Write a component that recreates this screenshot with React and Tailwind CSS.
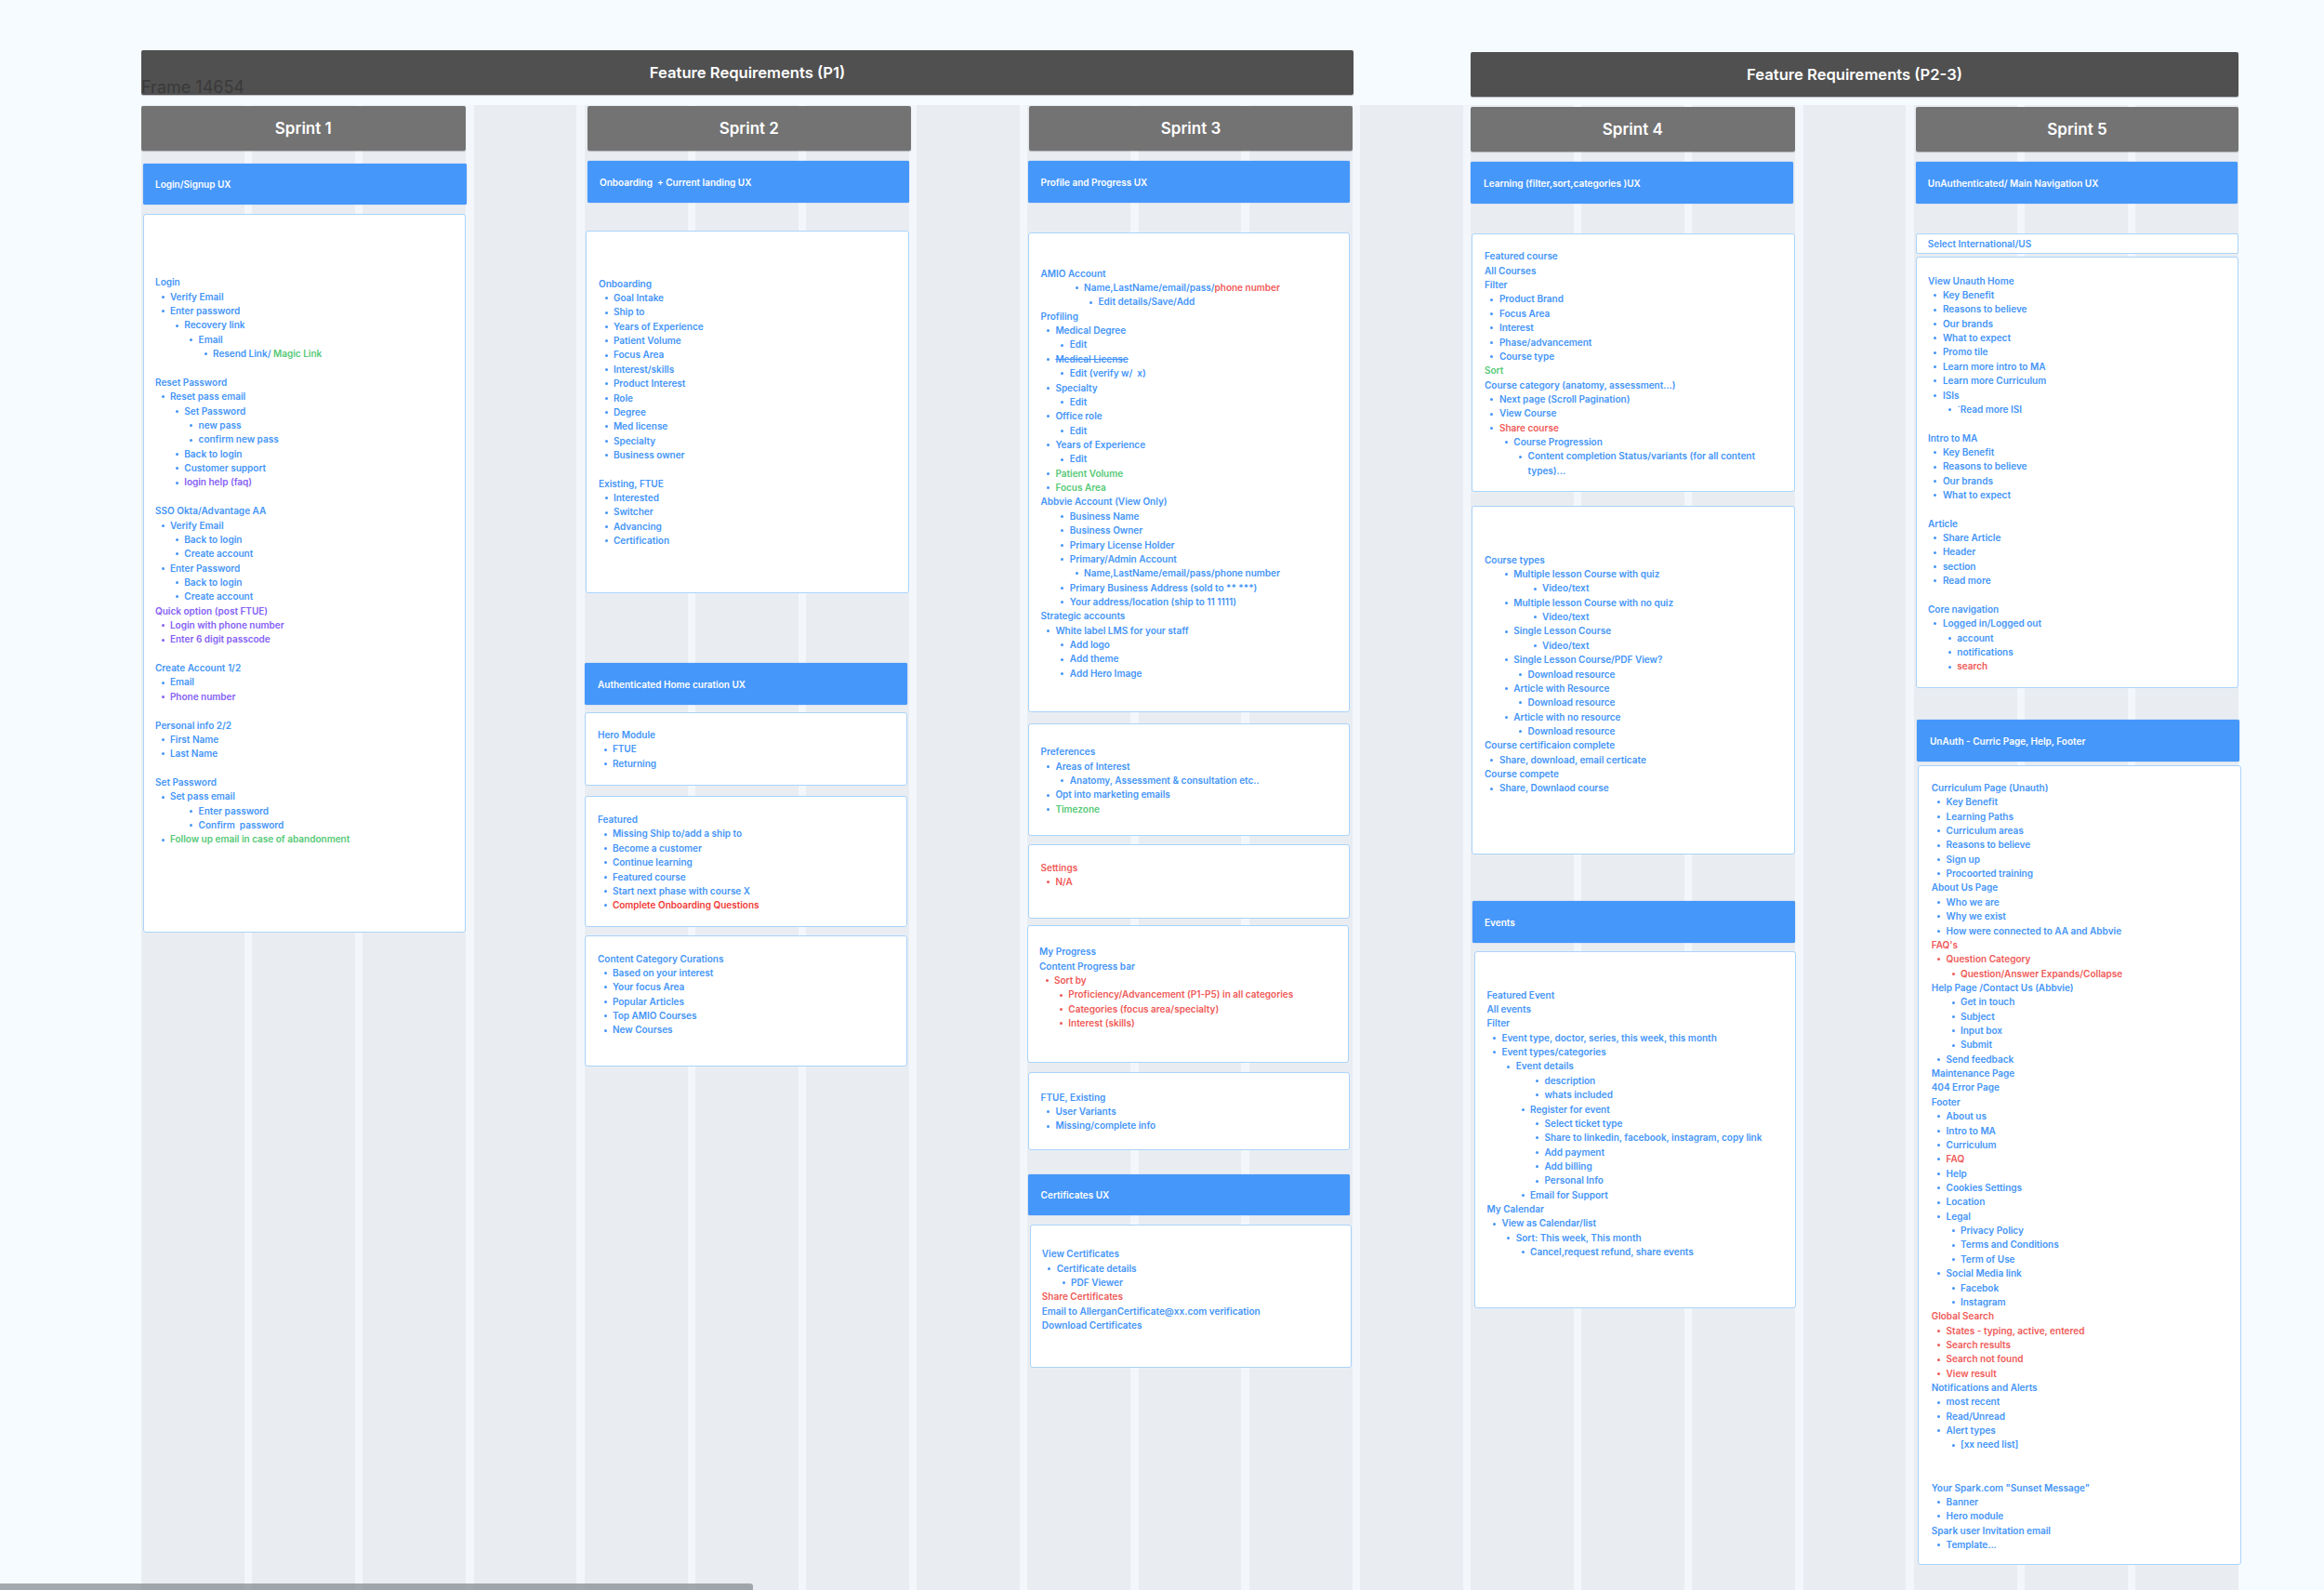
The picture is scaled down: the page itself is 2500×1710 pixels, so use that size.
import React from "react";

// text colours used in the requirement lists
const textColors = {
  blue: "text-[#4495f8]",
  red: "text-[#ef5a57]",
  hot: "text-[#f03a36]",
  green: "text-[#55c975]",
  purple: "text-[#8560f5]",
};

const bulletColors = {
  blue: "bg-[#4495f8]",
  red: "bg-[#ef5a57]",
  purple: "bg-[#8560f5]",
};

const levelPad = [
  "pl-0",
  "pl-[6.5px]",
  "pl-[21.9px]",
  "pl-[37.2px]",
  "pl-[52.6px]",
];

// row = [level, text, textColor, bulletColor]; null = empty row
const sprint1 = [
  [0, "Login"],
  [1, "Verify Email"],
  [1, "Enter password"],
  [2, "Recovery link"],
  [3, "Email"],
  [4, <>Resend Link/ <span className={textColors.green}>Magic Link</span></>],
  null,
  [0, "Reset Password"],
  [1, "Reset pass email"],
  [2, "Set Password"],
  [3, "new pass"],
  [3, "confirm new pass"],
  [2, "Back to login"],
  [2, "Customer support"],
  [2, "login help (faq)", "purple"],
  null,
  [0, "SSO Okta/Advantage AA"],
  [1, "Verify Email"],
  [2, "Back to login"],
  [2, "Create account"],
  [1, "Enter Password"],
  [2, "Back to login"],
  [2, "Create account"],
  [0, "Quick option (post FTUE)", "purple"],
  [1, "Login with phone number", "purple", "purple"],
  [1, "Enter 6 digit passcode", "purple", "purple"],
  null,
  [0, "Create Account 1/2"],
  [1, "Email"],
  [1, "Phone number", "purple", "purple"],
  null,
  [0, "Personal info 2/2"],
  [1, "First Name"],
  [1, "Last Name"],
  null,
  [0, "Set Password"],
  [1, "Set pass email"],
  [3, "Enter password"],
  [3, "Confirm  password"],
  [1, "Follow up email in case of abandonment", "green"],
];

const onboarding = [
  [0, "Onboarding"],
  [1, "Goal Intake"],
  [1, "Ship to"],
  [1, "Years of Experience"],
  [1, "Patient Volume"],
  [1, "Focus Area"],
  [1, "Interest/skills"],
  [1, "Product Interest"],
  [1, "Role"],
  [1, "Degree"],
  [1, "Med license"],
  [1, "Specialty"],
  [1, "Business owner"],
  null,
  [0, "Existing, FTUE"],
  [1, "Interested"],
  [1, "Switcher"],
  [1, "Advancing"],
  [1, "Certification"],
];

const hero = [
  [0, "Hero Module"],
  [1, "FTUE"],
  [1, "Returning"],
];

const featured = [
  [0, "Featured"],
  [1, "Missing Ship to/add a ship to"],
  [1, "Become a customer"],
  [1, "Continue learning"],
  [1, "Featured course"],
  [1, "Start next phase with course X"],
  [1, "Complete Onboarding Questions", "hot"],
];

const curations = [
  [0, "Content Category Curations"],
  [1, "Based on your interest"],
  [1, "Your focus Area"],
  [1, "Popular Articles"],
  [1, "Top AMIO Courses"],
  [1, "New Courses"],
];

const profile = [
  [0, "AMIO Account"],
  [3, <>Name,LastName/email/pass/<span className={textColors.red}>phone number</span></>],
  [4, "Edit details/Save/Add"],
  [0, "Profiling"],
  [1, "Medical Degree"],
  [2, "Edit"],
  [1, <span className="line-through">Medical License</span>],
  [2, "Edit (verify w/  x)"],
  [1, "Specialty"],
  [2, "Edit"],
  [1, "Office role"],
  [2, "Edit"],
  [1, "Years of Experience"],
  [2, "Edit"],
  [1, "Patient Volume", "green"],
  [1, "Focus Area", "green"],
  [0, "Abbvie Account (View Only)"],
  [2, "Business Name"],
  [2, "Business Owner"],
  [2, "Primary License Holder"],
  [2, "Primary/Admin Account"],
  [3, "Name,LastName/email/pass/phone number"],
  [2, "Primary Business Address (sold to ** ***)"],
  [2, "Your address/location (ship to 11 1111)"],
  [0, "Strategic accounts"],
  [1, "White label LMS for your staff"],
  [2, "Add logo"],
  [2, "Add theme"],
  [2, "Add Hero Image"],
];

const preferences = [
  [0, "Preferences"],
  [1, "Areas of Interest"],
  [2, "Anatomy, Assessment & consultation etc.."],
  [1, "Opt into marketing emails"],
  [1, "Timezone", "green"],
];

const settings = [
  [0, "Settings", "red"],
  [1, "N/A", "red", "red"],
];

const progress = [
  [0, "My Progress"],
  [0, "Content Progress bar"],
  [1, "Sort by", "red", "red"],
  [2, "Proficiency/Advancement (P1-P5) in all categories", "red", "red"],
  [2, "Categories (focus area/specialty)", "red", "red"],
  [2, "Interest (skills)", "red", "red"],
];

const ftue = [
  [0, "FTUE, Existing"],
  [1, "User Variants"],
  [1, "Missing/complete info"],
];

const certificates = [
  [0, "View Certificates"],
  [1, "Certificate details"],
  [2, "PDF Viewer"],
  [0, "Share Certificates", "red"],
  [0, "Email to AllerganCertificate@xx.com verification"],
  [0, "Download Certificates"],
];

const learning = [
  [0, "Featured course"],
  [0, "All Courses"],
  [0, "Filter"],
  [1, "Product Brand"],
  [1, "Focus Area"],
  [1, "Interest"],
  [1, "Phase/advancement"],
  [1, "Course type"],
  [0, "Sort", "green"],
  [0, "Course category (anatomy, assessment...)"],
  [1, "Next page (Scroll Pagination)"],
  [1, "View Course"],
  [1, "Share course", "red"],
  [2, "Course Progression"],
  [3, "Content completion Status/variants (for all content types)..."],
];

const courseTypes = [
  [0, "Course types"],
  [2, "Multiple lesson Course with quiz"],
  [4, "Video/text"],
  [2, "Multiple lesson Course with no quiz"],
  [4, "Video/text"],
  [2, "Single Lesson Course"],
  [4, "Video/text"],
  [2, "Single Lesson Course/PDF View?"],
  [3, "Download resource"],
  [2, "Article with Resource"],
  [3, "Download resource"],
  [2, "Article with no resource"],
  [3, "Download resource"],
  [0, "Course certificaion complete"],
  [1, "Share, download, email certicate"],
  [0, "Course compete"],
  [1, "Share, Downlaod course"],
];

const events = [
  [0, "Featured Event"],
  [0, "All events"],
  [0, "Filter"],
  [1, "Event type, doctor, series, this week, this month"],
  [1, "Event types/categories"],
  [2, "Event details"],
  [4, "description"],
  [4, "whats included"],
  [3, "Register for event"],
  [4, "Select ticket type"],
  [4, "Share to linkedin, facebook, instagram, copy link"],
  [4, "Add payment"],
  [4, "Add billing"],
  [4, "Personal Info"],
  [3, "Email for Support"],
  [0, "My Calendar"],
  [1, "View as Calendar/list"],
  [2, "Sort: This week, This month"],
  [3, "Cancel,request refund, share events"],
];

const unauthHome = [
  [0, "View Unauth Home"],
  [1, "Key Benefit"],
  [1, "Reasons to believe"],
  [1, "Our brands"],
  [1, "What to expect"],
  [1, "Promo tile"],
  [1, "Learn more intro to MA"],
  [1, "Learn more Curriculum"],
  [1, "ISIs"],
  [2, "`Read more ISI"],
  null,
  [0, "Intro to MA"],
  [1, "Key Benefit"],
  [1, "Reasons to believe"],
  [1, "Our brands"],
  [1, "What to expect"],
  null,
  [0, "Article"],
  [1, "Share Article"],
  [1, "Header"],
  [1, "section"],
  [1, "Read more"],
  null,
  [0, "Core navigation"],
  [1, "Logged in/Logged out"],
  [2, "account"],
  [2, "notifications"],
  [2, "search", "red"],
];

const curriculum = [
  [0, "Curriculum Page (Unauth)"],
  [1, "Key Benefit"],
  [1, "Learning Paths"],
  [1, "Curriculum areas"],
  [1, "Reasons to believe"],
  [1, "Sign up"],
  [1, "Procoorted training"],
  [0, "About Us Page"],
  [1, "Who we are"],
  [1, "Why we exist"],
  [1, "How were connected to AA and Abbvie"],
  [0, "FAQ's", "red"],
  [1, "Question Category", "red", "red"],
  [2, "Question/Answer Expands/Collapse", "red", "red"],
  [0, "Help Page /Contact Us (Abbvie)"],
  [2, "Get in touch"],
  [2, "Subject"],
  [2, "Input box"],
  [2, "Submit"],
  [1, "Send feedback"],
  [0, "Maintenance Page"],
  [0, "404 Error Page"],
  [0, "Footer"],
  [1, "About us"],
  [1, "Intro to MA"],
  [1, "Curriculum"],
  [1, "FAQ", "red"],
  [1, "Help"],
  [1, "Cookies Settings"],
  [1, "Location"],
  [1, "Legal"],
  [2, "Privacy Policy"],
  [2, "Terms and Conditions"],
  [2, "Term of Use"],
  [1, "Social Media link"],
  [2, "Facebok"],
  [2, "Instagram"],
  [0, "Global Search", "red"],
  [1, "States - typing, active, entered", "red", "red"],
  [1, "Search results", "red", "red"],
  [1, "Search not found", "red", "red"],
  [1, "View result", "red", "red"],
  [0, "Notifications and Alerts"],
  [1, "most recent"],
  [1, "Read/Unread"],
  [1, "Alert types"],
  [2, "[xx need list]"],
  null,
  null,
  [0, 'Your Spark.com "Sunset Message"'],
  [1, "Banner"],
  [1, "Hero module"],
  [0, "Spark user Invitation email"],
  [1, "Template..."],
];

const Row = ({ row }) => {
  if (!row) return <div className="h-[15.36px]" />;
  const [level, text, color = "blue", bullet = "blue"] = row;
  return (
    <div className={`flex items-start ${levelPad[level]} ${textColors[color]}`}>
      {level > 0 && (
        <span className={`mt-[6.2px] mr-[6.4px] h-[3px] w-[3px] shrink-0 rounded-full ${bulletColors[bullet]}`} />
      )}
      <span>{text}</span>
    </div>
  );
};

const Card = ({ className, lines }) => (
  <div className={`rounded-[3px] border border-[#a9d3fb] bg-white pr-[20px] text-[10px] leading-[15.36px] font-semibold whitespace-pre-wrap ${className}`}>
    <div className="pt-[0.4px]">
      {lines.map((row, i) => (
        <Row key={i} row={row} />
      ))}
    </div>
  </div>
);

const SprintHead = ({ className, children }) => (
  <div className={`flex items-center justify-center rounded-[2px] bg-[#737373] pt-[2px] text-[17px] font-semibold text-white shadow-[0_1px_1px_#00000040] ${className}`}>
    {children}
  </div>
);

const Section = ({ className, children }) => (
  <div className={`flex items-center rounded-[2px] bg-[#4697fa] pt-[2px] text-[10px] font-semibold text-white shadow-[0_0_1px_#2f7fe0] ${className}`}>
    {children}
  </div>
);

const App = () => {
  return (
    <div className="relative h-[1710px] overflow-hidden bg-[#f6fbff] font-['Inter',sans-serif]">
      {/* frame stripes behind everything */}
      <div className="absolute top-[113px] bottom-0 left-[152px] grid w-[2256px] grid-cols-[repeat(19,minmax(0,1fr))] gap-x-[8.2px] bg-[#f3f7fb]">
        {Array.from({ length: 19 }).map((_, i) => (
          <div key={i} className="bg-[#e9edf2]" />
        ))}
      </div>

      <div className="relative flex flex-col pt-[54px] pl-[152px]">
        <div className="flex h-[59.5px] items-start">
          <div className="relative flex h-[48px] w-[1304px] items-center justify-center rounded-[2px] bg-[#505050] pt-[1px] text-[16.6px] font-semibold text-white shadow-[0_1px_1px_#00000040]">
            Feature Requirements (P1)
            <span className="absolute top-[29px] left-0 text-[18px] leading-[22px] font-normal text-[#3a3a3a]">Frame 14654</span>
          </div>
          <div className="mt-[1.7px] ml-[126px] flex h-[48px] w-[826px] items-center justify-center rounded-[2px] bg-[#505050] pt-[1px] text-[16.6px] font-semibold text-white shadow-[0_1px_1px_#00000040]">
            Feature Requirements (P2-3)
          </div>
        </div>

        <div className="flex items-start">
          {/* Sprint 1 */}
          <div className="flex w-[350px] flex-col">
            <SprintHead className="h-[48.5px] w-[348.5px]">Sprint 1</SprintHead>
            <Section className="mt-[13.5px] ml-[1.5px] h-[44.5px] w-[348px] pl-[13.5px]">Login/Signup UX</Section>
            <Card className="mt-[10px] ml-[1.5px] h-[773px] w-[347.5px] pt-[65px] pl-[12.5px]" lines={sprint1} />
          </div>

          {/* Sprint 2 */}
          <div className="ml-[128px] flex w-[350px] flex-col">
            <SprintHead className="ml-[1.6px] h-[48.5px] w-[348.4px]">Sprint 2</SprintHead>
            <Section className="mt-[11px] ml-[1.6px] h-[44.5px] w-[346.4px] pl-[13.4px]">Onboarding&nbsp; + Current landing UX</Section>
            <Card className="mt-[30.5px] h-[389.5px] w-[348px] pt-[48.3px] pl-[13px]" lines={onboarding} />
            <Section className="mt-[75.5px] ml-[-1px] h-[44.5px] w-[347px] pl-[14px]">Authenticated Home curation UX</Section>
            <Card className="mt-[8.5px] ml-[-1px] h-[78.6px] w-[347px] pt-[15.7px] pl-[13px]" lines={hero} />
            <Card className="mt-[11.8px] ml-[-1px] h-[141px] w-[347px] pt-[16.3px] pl-[13px]" lines={featured} />
            <Card className="mt-[8.9px] ml-[-1px] h-[140.6px] w-[347px] pt-[15.9px] pl-[13px]" lines={curations} />
          </div>

          {/* Sprint 3 */}
          <div className="ml-[125px] flex w-[350px] flex-col">
            <SprintHead className="ml-[2px] h-[48.5px] w-[348px]">Sprint 3</SprintHead>
            <Section className="mt-[11px] ml-[0.7px] h-[44.5px] w-[346.8px] pl-[13.8px]">Profile and Progress UX</Section>
            <Card className="mt-[32.5px] ml-[0.7px] h-[516.4px] w-[346.8px] pt-[35.3px] pl-[12.8px]" lines={profile} />
            <Card className="mt-[11.6px] ml-[0.7px] h-[120.6px] w-[346.8px] pt-[21.9px] pl-[12.8px]" lines={preferences} />
            <Card className="mt-[9.4px] ml-[0.7px] h-[80px] w-[346.8px] pt-[16.3px] pl-[12.8px]" lines={settings} />
            <Card className="mt-[6.6px] ml-[-0.4px] h-[148.4px] w-[346.7px] pt-[20.3px] pl-[12.4px]" lines={progress} />
            <Card className="mt-[10px] ml-[0.8px] h-[84px] w-[346.7px] pt-[18.3px] pl-[12.8px]" lines={ftue} />
            <Section className="mt-[25.7px] ml-[0.8px] h-[44.3px] w-[346.7px] pl-[13.8px]">Certificates UX</Section>
            <Card className="mt-[9.6px] ml-[2.5px] h-[154.9px] w-[346.5px] pt-[23.4px] pl-[12.3px]" lines={certificates} />
          </div>

          {/* Sprint 4 */}
          <div className="ml-[127px] flex w-[350px] flex-col">
            <SprintHead className="mt-[1.5px] h-[47.7px] w-[348.5px]">Sprint 4</SprintHead>
            <Section className="mt-[11.3px] h-[45px] w-[347px] pl-[14px]">Learning (filter,sort,categories )UX</Section>
            <Card className="mt-[32px] ml-[1.4px] h-[277.7px] w-[347.6px] pt-[16px] pl-[12.6px]" lines={learning} />
            <Card className="mt-[15px] ml-[1.4px] h-[375.6px] w-[347.6px] pt-[49.6px] pl-[12.6px]" lines={courseTypes} />
            <Section className="mt-[50px] ml-[2px] h-[44.7px] w-[346.5px] pl-[13px]">Events</Section>
            <Card className="mt-[9.5px] ml-[3.7px] h-[383.5px] w-[346.8px] pt-[37.8px] pl-[12.8px]" lines={events} />
          </div>

          {/* Sprint 5 */}
          <div className="ml-[128.6px] flex w-[352px] flex-col">
            <SprintHead className="mt-[1.5px] h-[47.7px] w-[347.7px]">Sprint 5</SprintHead>
            <Section className="mt-[11.3px] h-[45px] w-[346.4px] pl-[13.2px]">UnAuthenticated/ Main Navigation UX</Section>
            <div className="mt-[32px] flex h-[21.7px] w-[347px] items-center rounded-[2px] border border-[#a9d3fb] bg-white pt-[1.5px] pl-[12.2px] text-[10px] font-semibold text-[#4495f8]">
              Select International/US
            </div>
            <Card className="mt-[3.6px] h-[464px] w-[347px] pt-[17px] pl-[12.4px]" lines={unauthHome} />
            <Section className="mt-[33.4px] ml-[1.4px] h-[45px] w-[347px] pl-[14px]">UnAuth - Curric Page, Help, Footer</Section>
            <Card className="mt-[4.6px] ml-[2.7px] h-[859.4px] w-[347.4px] pt-[15.3px] pl-[13.4px]" lines={curriculum} />
          </div>
        </div>
      </div>

      {/* canvas scrollbar */}
      <div className="absolute bottom-0 left-0 h-[7px] w-[810px] rounded-tr-[3px] bg-[#80868a]/70" />
    </div>
  );
};

export default App;
